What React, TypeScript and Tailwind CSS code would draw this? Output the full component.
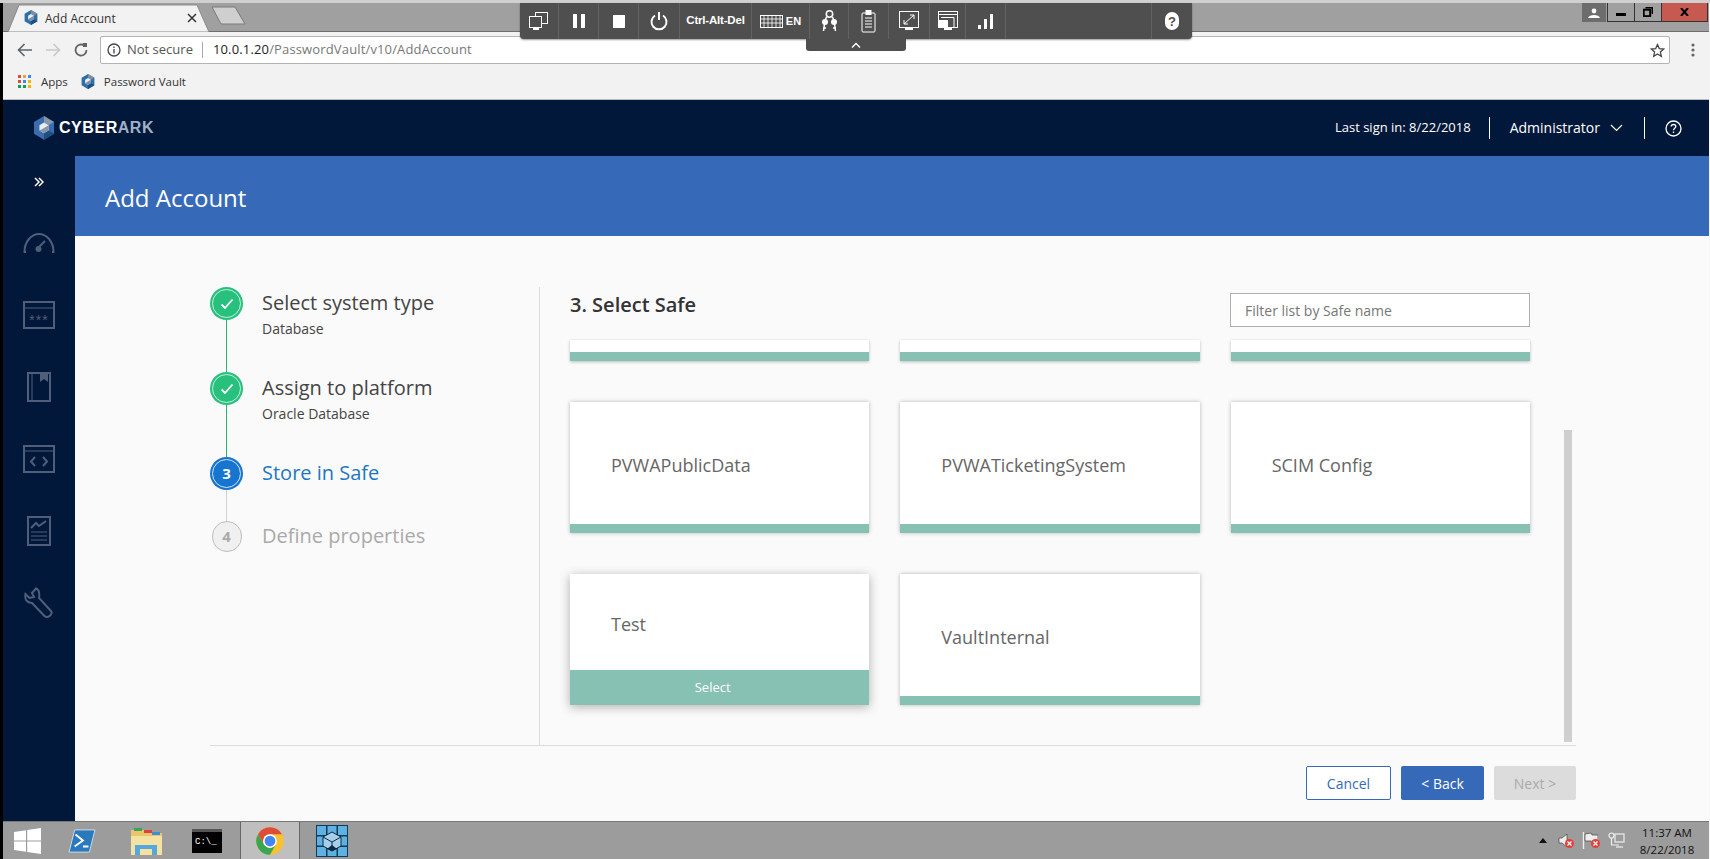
import React from "react";

const Hex = ({ size = 15, a = "#2d6fa8", b = "#7f8ea3" }: { size?: number; a?: string; b?: string }) => (
  <svg width={size} height={size * 1.08} viewBox="0 0 24 26">
    <path d="M12 0 23 6.5V19.5L12 26 1 19.5V6.5Z" fill={a} />
    <path d="M12 0 23 6.5 17 10 12 7Z" fill={b} />
    <path d="M12 7 17 10V16L12 19 7 16V10Z" fill="#e8edf2" />
    <path d="M12 19 17 16 23 19.5 12 26Z" fill="#1d4f80" />
    <path d="M12 13 17 10V16L12 19 7 16Z" fill={b} />
  </svg>
);

const Ic = ({ w = 24, h = 24, vb = "0 0 24 24", sw = 2, c = "#fff", children }: any) => (
  <svg width={w} height={h} viewBox={vb} fill="none" stroke={c} strokeWidth={sw}>{children}</svg>
);

const cellWidths = [39, 40, 40, 41, 72, 58, 39, 40, 41, 36, 40, 146, 40];

function VncCell({ w, children, last }: { w: number; children?: React.ReactNode; last?: boolean }) {
  return (
    <div className={"h-full flex items-center justify-center gap-[3px] shrink-0 " + (last ? "" : "border-r border-[#626262]")} style={{ width: w }}>
      {children}
    </div>
  );
}

function VncBar() {
  const items: React.ReactNode[] = [
    <Ic w={20} h={24} vb="0 0 20 24" sw={1}><rect x="6.5" y="3.5" width="12" height="11" /><rect x="0.5" y="7.5" width="12" height="11" fill="#4f4f4f" /><rect x="4" y="19" width="6" height="2" fill="#fff" stroke="none" /></Ic>,
    <div className="flex gap-[4px]"><div className="w-[4px] h-[14px] bg-white" /><div className="w-[4px] h-[14px] bg-white" /></div>,
    <div className="w-[12px] h-[13px] bg-white" />,
    <Ic w={18} h={20} vb="0 0 18 20" sw={2}><path d="M5 4.500A7.500 7.500 0 1 0 13 4.500" /><path d="M9 1V9" /></Ic>,
    <span className="text-white text-[11.500px] font-bold font-['Liberation_Sans',sans-serif] tracking-[-0.2px]">Ctrl-Alt-Del</span>,
    <>
      <Ic w={23} h={13} vb="0 0 23 13" sw={1}><rect x="0.5" y="0.5" width="22" height="12" /><path d="M0 4H23M0 8H23M4 0V13M8 0V13M12 0V13M16 0V13M20 0V13" strokeWidth="0.8" /></Ic>
      <span className="text-white text-[11px] font-bold font-['Liberation_Sans',sans-serif]">EN</span>
    </>,
    <Ic w={17} h={22} vb="0 0 17 22" sw={1.500}>
      <circle cx="8.500" cy="4" r="3.200" />
      <path d="M5.500 7 4 11M11.500 7 13 11" />
      <circle cx="4" cy="12" r="3" fill="#fff" stroke="none" />
      <circle cx="13" cy="12" r="3" fill="#fff" stroke="none" />
      <path d="M3.500 14 2.500 21M2 18H5M13.500 14 14.500 21M15 18H12" />
    </Ic>,
    <Ic w={15} h={24} vb="0 0 15 24" sw={1}><rect x="1" y="4" width="13" height="19" rx="1" /><rect x="5" y="1.500" width="5" height="4" fill="#fff" /><path d="M4 9H11M4 12H11M4 15H11M4 18H11" /></Ic>,
    <Ic w={20} h={24} vb="0 0 20 24" sw={1}><rect x="0.5" y="2.500" width="19" height="16" /><path d="M5 15 15 6M11 6H15V10M5 11V15H9" /><rect x="6" y="19" width="8" height="2" fill="#fff" stroke="none" /></Ic>,
    <Ic w={20} h={24} vb="0 0 20 24" sw={1}><rect x="0.5" y="2.500" width="19" height="16" /><path d="M0 5.500H19M3 8.500H16V18" /><rect x="1" y="11" width="9" height="7" fill="#fff" stroke="none" /><rect x="6" y="19" width="8" height="2" fill="#fff" stroke="none" /></Ic>,
    <div className="flex items-end gap-[3px] h-[15px]"><div className="w-[3px] h-[4px] bg-white" /><div className="w-[3px] h-[10px] bg-white" /><div className="w-[3px] h-[15px] bg-white" /></div>,
    null,
    <div className="w-[14px] h-[18px] rounded-full bg-white flex items-center justify-center text-[#4f4f4f] text-[13px] font-bold font-['Liberation_Sans',sans-serif] leading-none">?</div>,
  ];
  return (
    <div className="absolute left-[520px] top-[3px] flex flex-col items-center">
      <div className="flex h-[36px] w-[672px] bg-[#4f4f4f] rounded-b-[4px] shadow-[0_1px_2px_rgba(0,0,0,0.4)]">
        {items.map((it, i) => (
          <VncCell key={i} w={cellWidths[i]} last={i === items.length - 1}>{it}</VncCell>
        ))}
      </div>
      <div className="w-[100px] h-[12px] bg-[#4f4f4f] rounded-b-[3px] flex items-center justify-center">
        <Ic w={10} h={6} vb="0 0 10 6" sw={1.4}><path d="M1 5.500 5 1.500 9 5.500" /></Ic>
      </div>
    </div>
  );
}

function Chrome() {
  return (
    <div className="shrink-0 font-['Open_Sans',sans-serif]">
      <div className="h-[29px] bg-[#a0a0a0] border-b border-[#6e6e6e] flex items-end pl-[4px]">
        <div className="relative w-[204px] h-[28px] flex items-center pl-[17px] pr-[14px] gap-[7px] -mb-px">
          <svg className="absolute inset-0" width="204" height="28" viewBox="0 0 204 28"><path d="M1 28 12 1H190L202 28Z" fill="#f2f2f2" stroke="#8a8a8a" /></svg>
          <span className="relative"><Hex size={14} /></span>
          <span className="relative text-[12px] text-[#333] flex-1 pt-px">Add Account</span>
          <span className="relative"><Ic w={10} h={10} vb="0 0 10 10" sw={1.5} c="#333"><path d="M1 1 9 9M9 1 1 9" /></Ic></span>
        </div>
        <svg width="36" height="20" viewBox="0 0 36 20" className="mb-[5px]"><path d="M1 1H24L34 18 10 18Z" fill="#cfcfcf" stroke="#7a7a7a" /></svg>
        <div className="flex-1" />
        <div className="flex self-start h-[19px] mr-[1px]">
          <div className="w-[24px] bg-[#6d6d6d] flex items-center justify-center mr-px">
            <svg width="12" height="10" viewBox="0 0 12 10" fill="#fff"><circle cx="6" cy="3" r="2.400" /><path d="M0 10C1 6 11 6 12 10Z" /></svg>
          </div>
          <div className="w-[28px] border border-t-0 border-[#333] bg-[#a0a0a0] flex items-center justify-center"><div className="w-[10px] h-[3px] mt-[4px] bg-black" /></div>
          <div className="w-[26px] border-b border-[#333] bg-[#a0a0a0] flex items-center justify-center">
            <svg width="10" height="10" viewBox="0 0 10 10" fill="none" stroke="#000" strokeWidth="1.400"><rect x="0.7" y="2.700" width="6.500" height="6.500" strokeWidth="2" /><path d="M2.500 .7H9.300V7" /></svg>
          </div>
          <div className="w-[47px] bg-[#c75a50] border border-t-0 border-[#333] flex items-center justify-center">
            <svg width="9" height="8" viewBox="0 0 9 8" stroke="#000" strokeWidth="2"><path d="M1 0 8 8M8 0 1 8" /></svg>
          </div>
        </div>
      </div>
      <div className="h-[34px] bg-[#f2f2f2] flex items-center pt-[2px] pl-[14px] pr-[14px]">
        <Ic w={16} h={14} vb="0 0 16 14" sw={1.6} c="#5f6368"><path d="M15 7H1.500M7.500 1 1.500 7 7.500 13" /></Ic>
        <span className="ml-[12px]"><Ic w={16} h={14} vb="0 0 16 14" sw={1.6} c="#c9c9c9"><path d="M1 7H14.500M8.500 1 14.500 7 8.500 13" /></Ic></span>
        <span className="ml-[12px] mr-[11px]"><Ic w={16} h={16} vb="0 0 16 16" sw={1.8} c="#5f6368"><path d="M13.500 8A5.500 5.500 0 1 1 11.500 3.800" /><path d="M10 1 14 1 14 5 10 5Z" fill="#5f6368" stroke="none" /></Ic></span>
        <div className="flex-1 h-[28px] bg-white border border-[#b4b4b4] rounded-[2px] flex items-center pl-[6px] pr-[4px] text-[13px]">
          <svg width="14" height="14" viewBox="0 0 14 14" fill="none" stroke="#444" strokeWidth="1.300"><circle cx="7" cy="7" r="6" /><path d="M7 6V10.500M7 3.500V5" /></svg>
          <span className="text-[#555] ml-[6px]">Not secure</span>
          <span className="w-px h-[16px] bg-[#aaa] ml-[9px] mr-[10px]" />
          <span className="text-[#222] tracking-[0.15px]">10.0.1.20</span>
          <span className="text-[#777] tracking-[0.15px]">/PasswordVault/v10/AddAccount</span>
          <span className="flex-1" />
          <svg width="15" height="15" viewBox="0 0 24 24" fill="none" stroke="#444" strokeWidth="2"><path d="M12 2.500 14.900 9l7 .7-5.300 4.700 1.600 7-6.200-3.700-6.200 3.700 1.600-7L2.100 9.700l7-.7Z" /></svg>
        </div>
        <svg width="4" height="14" viewBox="0 0 4 14" fill="#666" className="ml-[21px]"><circle cx="2" cy="2" r="1.600" /><circle cx="2" cy="7" r="1.600" /><circle cx="2" cy="12" r="1.600" /></svg>
      </div>
      <div className="h-[34px] bg-[#f2f2f2] border-b border-[#bbb] flex items-center pb-[2px] pl-[15px] text-[11.500px] text-[#333]">
        <div className="grid grid-cols-3 gap-[2px] w-[13px]">
          {["#dd4b39", "#e8a33d", "#4285f4", "#dd4b39", "#4285f4", "#f4b400", "#0f9d58", "#0f9d58", "#f4b400"].map((c, i) => (
            <div key={i} className="w-[3px] h-[3px]" style={{ background: c }} />
          ))}
        </div>
        <span className="ml-[10px]">Apps</span>
        <span className="ml-[13px] mr-[9px]"><Hex size={14} /></span>
        <span>Password Vault</span>
      </div>
    </div>
  );
}

function Header() {
  return (
    <div className="h-[56px] shrink-0 bg-[#02183a] flex items-center pl-[30px] pr-[27px] font-['Open_Sans',sans-serif] text-white">
      <Hex size={22} a="#3a6cae" b="#8995a8" />
      <span className="ml-[4px] text-[16px] font-bold tracking-[0.55px] font-['Liberation_Sans',sans-serif]">CYBER<span className="text-[#9fb0c8]">ARK</span></span>
      <span className="flex-1" />
      <span className="text-[13px] -mt-px">Last sign in: 8/22/2018</span>
      <span className="w-px h-[22px] bg-white ml-[18px] mr-[20px]" />
      <span className="text-[14px] -mt-px">Administrator</span>
      <span className="ml-[10px]"><Ic w={13} h={8} vb="0 0 13 8" sw={1.2}><path d="M1 1 6.500 6.500 12 1" /></Ic></span>
      <span className="w-px h-[22px] bg-white ml-[21px] mr-[20px]" />
      <svg width="17" height="17" viewBox="0 0 17 17" fill="none" stroke="#fff" strokeWidth="1.300"><circle cx="8.500" cy="8.500" r="7.500" /><path d="M6.200 6.500C6.200 3.800 10.800 3.800 10.800 6.500 10.800 8.200 8.500 8.200 8.500 10.200M8.500 11.500V13" /></svg>
    </div>
  );
}

function Sidebar() {
  const c = "#4f5f79";
  const icons = [
    <Ic w={32} h={22} vb="0 0 32 22" sw={2} c={c}><path d="M3 20H1.500C1.500 10 8 2 16 2S30.500 10 30.500 20H29" /><path d="M14 17 22 9" /><circle cx="15.500" cy="17" r="3" fill={c} stroke="none" /></Ic>,
    <Ic w={32} h={28} vb="0 0 32 28" sw={2} c={c}><rect x="1" y="1" width="30" height="26" /><path d="M1 7H31" strokeWidth="1" /><text x="16" y="24" textAnchor="middle" fontSize="14" fontFamily="Liberation Sans" fill={c} stroke="none" letterSpacing="1">***</text></Ic>,
    <Ic w={24} h={30} vb="0 0 24 30" sw={2} c={c}><rect x="1" y="1" width="22" height="28" /><path d="M5 1V29" strokeWidth="1" /><path d="M13 1H21V10L17 7 13 10Z" fill={c} stroke="none" /></Ic>,
    <Ic w={32} h={28} vb="0 0 32 28" sw={2} c={c}><rect x="1" y="1" width="30" height="26" /><path d="M1 6H31" strokeWidth="1" /><path d="M12 12 8 16.500 12 21M20 12 24 16.500 20 21" /></Ic>,
    <Ic w={24} h={30} vb="0 0 24 30" sw={2} c={c}><rect x="1" y="1" width="22" height="28" /><path d="M4 12 9 7 12 10 19 5" /><path d="M4 16H20M4 20H20M4 24H20" strokeWidth="1" /></Ic>,
    <Ic w={31} h={32} vb="0 0 31 32" sw={2} c={c}><path d="M12 1.500 8 6 10 10 5.500 11 1.500 7C.5 13 3 15.500 8 16L20.500 29C23.500 32 29.500 27 27 24L15 11C16 5 14.500 2.500 12 1.500Z" /></Ic>,
  ];
  return (
    <div className="w-[72px] shrink-0 bg-[#02183a] flex flex-col items-center">
      <div className="h-[51px] flex items-center">
        <Ic w={10} h={10} vb="0 0 10 10" sw={1.500}><path d="M1 1 5 5 1 9M5 1 9 5 5 9" /></Ic>
      </div>
      {icons.map((ic, i) => (
        <div key={i} className="h-[72px] flex items-center justify-center">{ic}</div>
      ))}
    </div>
  );
}

function Step({ h, state, n, title, sub }: { h: number; state: "done" | "active" | "todo"; n?: number; title: string; sub?: string }) {
  const line = state === "done" ? "bg-[#27b57a]" : state === "active" ? "bg-[#d2d2d2]" : "";
  return (
    <div className="flex" style={{ height: h }}>
      <div className="w-[33px] flex flex-col items-center shrink-0">
        {state === "done" && (
          <div className="w-[33px] h-[33px] rounded-full bg-[#27c07d] p-[2px] shrink-0">
            <div className="w-full h-full rounded-full border border-[#c8f0dc] flex items-center justify-center">
              <Ic w={14} h={12} vb="0 0 14 12" sw={1.800}><path d="M1.500 6.500 5 10 12.500 1.500" /></Ic>
            </div>
          </div>
        )}
        {state === "active" && (
          <div className="w-[33px] h-[33px] rounded-full bg-[#1775cf] p-[2px] shrink-0">
            <div className="w-full h-full rounded-full border border-[#cfe4f8] flex items-center justify-center text-white text-[15px] font-bold">{n}</div>
          </div>
        )}
        {state === "todo" && (
          <div className="w-[30px] h-[31px] rounded-full bg-[#f0f0f0] border border-[#bdbdbd] flex items-center justify-center text-[#aaa] text-[15px] font-bold shrink-0">{n}</div>
        )}
        {line && <div className={"w-px flex-1 " + line} />}
      </div>
      <div className={"pl-[19px] " + (state === "todo" ? "-mt-[2px]" : "-mt-px")}>
        <div className={"text-[20px] leading-[33px] " + (state === "active" ? "text-[#1e78c2]" : state === "todo" ? "text-[#aaa]" : "text-[#444]")}>{title}</div>
        {sub && <div className="text-[14px] leading-[19px] text-[#444]">{sub}</div>}
      </div>
    </div>
  );
}

function Card({ name, hover }: { name?: string; hover?: boolean }) {
  return (
    <div className={"h-[131px] bg-white flex flex-col " + (hover ? "shadow-[0_2px_10px_rgba(0,0,0,0.3)]" : "shadow-[0_0_4px_rgba(0,0,0,0.28)]")}>
      <div className="flex-1 flex items-center pl-[41px] pt-[5px] text-[18px] text-[#666]">{name}</div>
      {hover ? (
        <div className="h-[35px] bg-[#87c1b4] flex items-center justify-center pr-[14px] text-white text-[13px]">Select</div>
      ) : (
        <div className="h-[9px] bg-[#87c1b4]" />
      )}
    </div>
  );
}

function Content() {
  return (
    <div className="flex-1 bg-[#fafafa] pl-[135px] pr-[133px] pt-[51px] font-['Open_Sans',sans-serif] flex flex-col">
      <div className="flex h-[459px] border-b border-[#dcdcdc]">
        <div className="w-[330px] shrink-0 border-r border-[#dcdcdc] h-full">
          <Step h={85} state="done" title="Select system type" sub="Database" />
          <Step h={85} state="done" title="Assign to platform" sub="Oracle Database" />
          <Step h={64} state="active" n={3} title="Store in Safe" />
          <Step h={40} state="todo" n={4} title="Define properties" />
        </div>
        <div className="flex-1 pl-[30px] flex flex-col min-w-0">
          <div className="h-[53px] shrink-0 flex justify-between pt-[6px] w-[960px]">
            <div className="text-[20px] font-semibold text-[#333] leading-[24px]">3. Select Safe</div>
            <div className="w-[300px] h-[34px] border border-[#b0b0b0] bg-white pl-[14px] flex items-center text-[14px] text-[#777]">Filter list by Safe name</div>
          </div>
          <div className="flex flex-1 min-h-0">
            <div className="w-[960px] shrink-0 grid grid-cols-3 gap-x-[31px] content-start">
              {[0, 1, 2].map((i) => (
                <div key={i} className="h-[21px] bg-white flex flex-col justify-end shadow-[0_1px_3px_rgba(0,0,0,0.25)]">
                  <div className="h-[9px] bg-[#87c1b4]" />
                </div>
              ))}
              <div className="col-span-3 h-[41px]" />
              <Card name="PVWAPublicData" />
              <Card name="PVWATicketingSystem" />
              <Card name="SCIM Config" />
              <div className="col-span-3 h-[41px]" />
              <Card name="Test" hover />
              <Card name="VaultInternal" />
            </div>
            <div className="ml-[34px] mt-[90px] w-[8px] h-[312px] bg-[#cfcfcf]" />
          </div>
        </div>
      </div>
      <div className="flex justify-end gap-[10px] pt-[20px] text-[14px]">
        <div className="w-[85px] h-[34px] border border-[#366ab8] rounded-[2px] bg-white text-[#366ab8] flex items-center justify-center">Cancel</div>
        <div className="w-[83px] h-[34px] bg-[#366ab8] rounded-[2px] text-white flex items-center justify-center">&lt; Back</div>
        <div className="w-[82px] h-[34px] bg-[#dcdcdc] rounded-[2px] text-[#aaa] flex items-center justify-center">Next &gt;</div>
      </div>
    </div>
  );
}

const XBadge = () => (
  <svg width="9" height="9" viewBox="0 0 9 9" className="-ml-[7px] mt-[6px]"><circle cx="4.500" cy="4.500" r="4.500" fill="#e2403a" /><path d="M2.500 2.500 6.500 6.500M6.500 2.500 2.500 6.500" stroke="#fff" strokeWidth="1.200" /></svg>
);

function Taskbar() {
  return (
    <div className="h-[38px] shrink-0 bg-[#9c9c9c] border-t border-[#777] flex items-center">
      <div className="ml-[11px] w-[27px]">
        <svg width="27" height="26" viewBox="0 0 27 26" fill="#fff"><path d="M0 4 12 2.300V12.400H0ZM13.200 2.100 27 0V12.400H13.200ZM0 13.600H12V23.700L0 22ZM13.200 13.600H27V26L13.200 23.900Z" /></svg>
      </div>
      <div className="ml-[27px]">
        <svg width="28" height="24" viewBox="0 0 30 26"><path d="M7 1H29L23 25H1Z" fill="#2a79bd" stroke="#cfe0ee" /><path d="M8 6 16 12.500 7 19M16 19H22" fill="none" stroke="#fff" strokeWidth="2" /></svg>
      </div>
      <div className="ml-[34px]">
        <svg width="33" height="30" viewBox="0 0 33 30"><path d="M1 4H15L18 7H32V29H1Z" fill="#e9c56c" /><rect x="4" y="2" width="8" height="3" fill="#3aa655" /><rect x="14" y="4" width="8" height="3" fill="#d8443a" /><rect x="22" y="6" width="8" height="3" fill="#3c8fdd" /><path d="M1 10H32V29H1Z" fill="#f6e2a0" /><path d="M5 29V19H27V29H22V23H10V29Z" fill="#53a8e0" /></svg>
      </div>
      <div className="ml-[29px] w-[30px] h-[24px] bg-black border-t-[3px] border-[#555] flex flex-col justify-center pl-[3px] text-white text-[9px] leading-none font-['Liberation_Mono',monospace]">C:\_</div>
      <div className="ml-[18px] w-[60px] h-full bg-[#bfbfbf] border-x border-[#666] flex items-center justify-center">
        <svg width="30" height="30" viewBox="0 0 24 24">
          <circle cx="12" cy="12" r="11" fill="#fbc02d" />
          <path d="M7.240 14.750 2.470 6.500A11 11 0 0 0 12 23L16.760 14.750A5.500 5.500 0 0 1 7.240 14.750Z" fill="#3aa655" />
          <path d="M12 6.500H21.530A11 11 0 0 0 2.470 6.500L7.240 14.750A5.500 5.500 0 0 1 12 6.500Z" fill="#dd4b39" />
          <circle cx="12" cy="12" r="5.500" fill="#fff" />
          <circle cx="12" cy="12" r="4.300" fill="#4285f4" />
        </svg>
      </div>
      <div className="ml-[16px]">
        <svg width="32" height="32" viewBox="0 0 32 32">
          <rect width="32" height="32" fill="#0e3a5c" />
          {[0, 1, 2].flatMap((r) => [0, 1, 2].map((k) => (
            <rect key={r + "-" + k} x={1 + k * 10.500} y={1 + r * 10.500} width="9" height="9" fill="#5fb2e0" />
          )))}
          <path d="M16 7 25 12V21L16 26 7 21V12Z" fill="#a8cfe8" stroke="#0b2a44" />
          <path d="M16 17 25 12M16 17 7 12M16 17V26" stroke="#0b2a44" strokeWidth="1" />
          <path d="M11 24 16 20 21 24 16 26Z" fill="#0b2a44" />
        </svg>
      </div>
      <div className="flex-1" />
      <svg width="8" height="5" viewBox="0 0 8 5" className="mr-[11px]"><path d="M0 5 4 0 8 5Z" fill="#111" /></svg>
      <div className="flex items-center">
        <svg width="14" height="15" viewBox="0 0 14 15" fill="#eee" stroke="#444" strokeWidth="0.700"><path d="M1 5H4L9 1V14L4 10H1Z" /></svg>
        <XBadge />
      </div>
      <div className="flex items-center ml-[8px]">
        <svg width="16" height="17" viewBox="0 0 16 17" fill="#eee" stroke="#444" strokeWidth="0.700"><path d="M1.500 0V17" strokeWidth="1.400" stroke="#eee" /><path d="M3 2 9 1 10 3 16 3V11H10L9 9H3Z" /></svg>
        <XBadge />
      </div>
      <div className="ml-[8px]">
        <svg width="17" height="17" viewBox="0 0 17 17" fill="none" stroke="#eee" strokeWidth="1.200"><circle cx="3.500" cy="3.500" r="2.500" /><path d="M3.500 6V13H11" /><rect x="7" y="2" width="9" height="8" /><path d="M8 15H15" /></svg>
      </div>
      <div className="w-[84px] pr-[16px] pl-[16px] flex flex-col items-center text-[11.500px] leading-[17px] text-[#111] font-['Open_Sans',sans-serif] whitespace-nowrap">
        <span>11:37 AM</span>
        <span>8/22/2018</span>
      </div>
    </div>
  );
}

export default function App() {
  return (
    <div className="relative w-[1710px] h-[859px] overflow-hidden flex flex-col bg-white">
      <div className="h-[3px] shrink-0 bg-[#d0d0d0]" />
      <div className="flex-1 flex min-h-0">
        <div className="w-[3px] shrink-0 bg-black" />
        <div className="flex-1 flex flex-col min-w-0">
          <Chrome />
          <Header />
          <div className="flex flex-1 min-h-0">
            <Sidebar />
            <div className="flex-1 flex flex-col min-w-0">
              <div className="h-[80px] shrink-0 bg-[#366ab8] flex items-center pl-[30px] pt-[3px] text-white text-[24px] font-['Open_Sans',sans-serif]">Add Account</div>
              <Content />
            </div>
          </div>
          <Taskbar />
        </div>
        <div className="w-px shrink-0 bg-[#f5f5f5]" />
      </div>
      <VncBar />
    </div>
  );
}
